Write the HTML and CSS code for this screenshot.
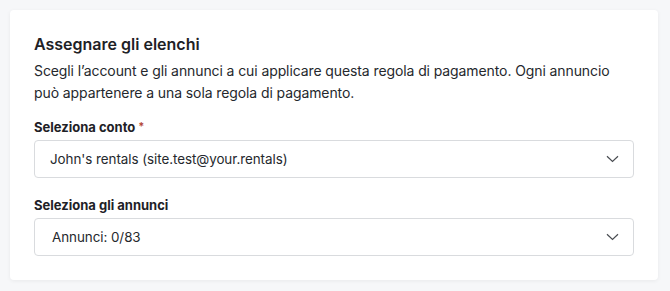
FILE: index.html
```html
<!DOCTYPE html>
<html lang="it">
<head>
    <meta charset="UTF-8">
    <meta name="viewport" content="width=device-width, initial-scale=1.0">
    <title>Assegnare gli elenchi</title>
    <link rel="stylesheet" href="styles.css">
</head>
<body>
    <div class="card">
        <h2>Assegnare gli elenchi</h2>
        <p class="intro">Scegli l’account e gli annunci a cui applicare questa regola di pagamento. Ogni annuncio può appartenere a una sola regola di pagamento.</p>

        <!-- Conto -->
        <div class="form-group">
            <label>Seleziona conto <span class="required">*</span></label>
            <div class="select">
                <span>John's rentals (site.test@your.rentals)</span>
                <svg width="13" height="8" viewBox="0 0 13 8"><path d="M1 1.2l5.5 5.3 5.5-5.3" fill="none" stroke="#4a4d52" stroke-width="1.2"/></svg>
            </div>
        </div>

        <!-- Annunci -->
        <div class="form-group">
            <label>Seleziona gli annunci</label>
            <div class="select">
                <span class="count">Annunci: 0/83</span>
                <svg width="13" height="8" viewBox="0 0 13 8"><path d="M1 1.2l5.5 5.3 5.5-5.3" fill="none" stroke="#4a4d52" stroke-width="1.2"/></svg>
            </div>
        </div>
    </div>
</body>
</html>
```

FILE: styles.css
```css
body {
    font-family: Inter, "Noto Sans", sans-serif;
    background-color: #f6f7f9;
    margin: 0;
    padding: 10px 12px 11px 10px;
    color: #1e2126;
}

.card {
    background-color: #fff;
    border-radius: 4px;
    box-shadow: 0 1px 4px rgba(0, 0, 0, 0.06);
    padding: 24px;
}

h2 {
    margin: 0;
    font-size: 16px;
    font-weight: 600;
    line-height: 20px;
}

.intro {
    margin: 6px 0 13px;
    font-size: 14px;
    letter-spacing: -0.1px;
    line-height: 22px;
    color: #25282d;
}

.form-group {
    margin-bottom: 17px;
}

.form-group:last-child {
    margin-bottom: 0;
}

label {
    display: block;
    margin-bottom: 3px;
    font-size: 13px;
    font-weight: 700;
    line-height: 20px;
}

.required {
    color: #b5473a;
    font-size: 11px;
    line-height: 0;
    vertical-align: 2px;
}

.select {
    display: flex;
    justify-content: space-between;
    align-items: center;
    height: 38px;
    box-sizing: border-box;
    padding: 0 14px 0 15px;
    border: 1px solid #d9dbde;
    border-radius: 4px;
    font-size: 13.4px;
    letter-spacing: -0.05px;
    color: #25282d;
}

.select .count {
    padding-left: 2px;
}
```
